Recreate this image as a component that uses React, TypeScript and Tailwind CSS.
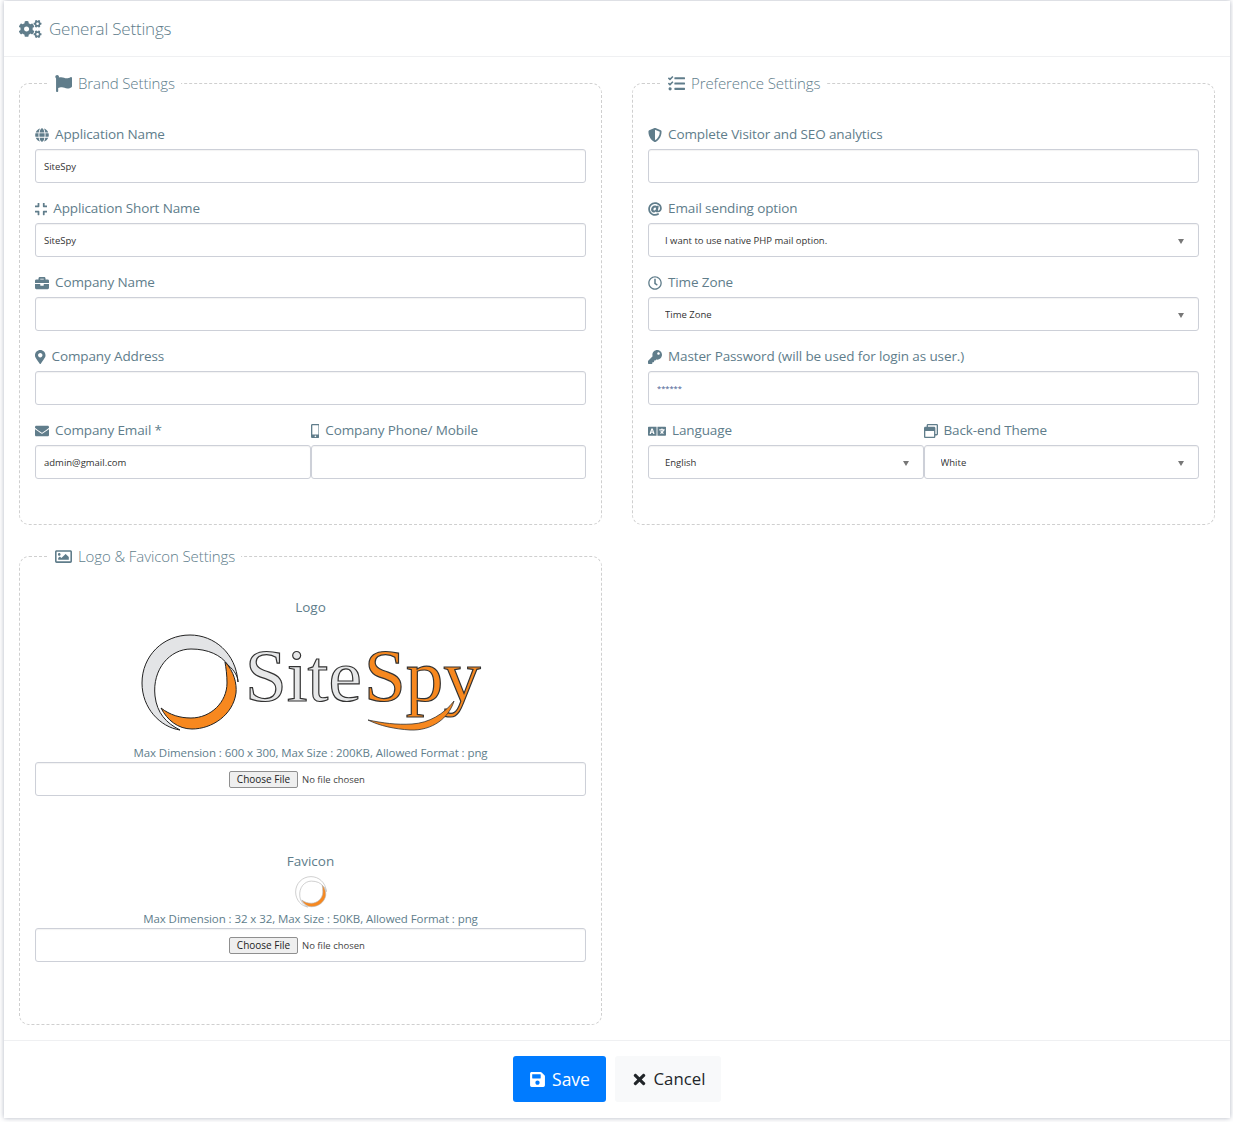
import React from "react";
import type { IconType } from "react-icons";
import {
  FaAt,
  FaBriefcase,
  FaCogs,
  FaCompress,
  FaFlag,
  FaGlobe,
  FaKey,
  FaLanguage,
  FaMapMarkerAlt,
  FaMobileAlt,
  FaRegClock,
  FaRegImage,
  FaRegWindowRestore,
  FaSave,
  FaShieldAlt,
  FaTasks,
  FaTimes,
  FaEnvelope,
} from "react-icons/fa";

const inputBox =
  "block h-[34px] w-full rounded-[3px] border border-[#cdd0d8] bg-white shadow-[inset_0_1px_1px_rgba(0,0,0,.05)] outline-none";

type FieldProps = { icon: IconType; iconClass?: string; label: string };

function Label({ icon: Icon, iconClass = "h-[14px] w-[14px]", children }: { icon: IconType; iconClass?: string; children: React.ReactNode }) {
  return (
    <div className="flex h-[27px] items-center gap-[6px] pb-[1px] text-[13.5px] leading-none tracking-[-0.12px] text-[#607d8b]">
      <Icon className={`shrink-0 ${iconClass}`} />
      <span>{children}</span>
    </div>
  );
}

function TextField({ icon, iconClass, label, value, inputClass = "text-[9.5px] text-[#333]" }: FieldProps & { value?: string; inputClass?: string }) {
  return (
    <div className="h-[74px] pt-[2px]">
      <Label icon={icon} iconClass={iconClass}>{label}</Label>
      <input className={`${inputBox} px-[8px] ${inputClass}`} defaultValue={value} />
    </div>
  );
}

function SelectField({ icon, iconClass, label, value }: FieldProps & { value: string }) {
  return (
    <div className="h-[74px] pt-[2px]">
      <Label icon={icon} iconClass={iconClass}>{label}</Label>
      <div className="relative">
        <select className={`${inputBox} appearance-none pt-[2px] pl-[16px] text-[9.5px] text-[#333]`} defaultValue={value}>
          <option>{value}</option>
        </select>
        <span className="absolute top-[16px] right-[15px] h-0 w-0 border-x-[3px] border-t-[5px] border-x-transparent border-t-[#777]" />
      </div>
    </div>
  );
}

function Panel({ icon: Icon, title, className, children }: { icon: IconType; title: string; className: string; children: React.ReactNode }) {
  return (
    <fieldset className={`rounded-[10px] border border-dashed border-[#cfcfcf] px-[15px] ${className}`}>
      <legend className="ml-[14px] flex items-center gap-[6px] px-[6px] text-[15px] leading-[22px] font-light tracking-[-0.1px] text-[#607d8b]">
        <Icon className="h-[17px] w-[17px]" />
        <span>{title}</span>
      </legend>
      {children}
    </fieldset>
  );
}

function Ring({ line, width, grey }: { line: string; width: number; grey: string }) {
  return (
    <>
      <path
        d="M238 681C236 652 214 634 190 634C163 634 142 655 142 682C142 707 160 726 180 729C166 722 157 712 155 695C152 668 170 648 191 648C208 648 221 654 228 664C235 670 238 676 238 681Z"
        fill={grey}
        stroke={line}
        strokeWidth={width}
      />
      <path
        d="M225 661C234 670 237 683 236 692C233 714 212 728 192 728C178 728 167 719 161 707C170 714 180 717 191 717C211 717 227 701 227 682C227 674 226 667 225 661Z"
        fill="#f7881f"
        stroke={line}
        strokeWidth={width}
      />
    </>
  );
}

function SiteSpyLogo() {
  return (
    <svg viewBox="140 630 345 104" width="345" height="104" className="ml-[105px] block">
      <Ring line="#222" width={1} grey="#e3e4e6" />
      <g fontFamily="'Liberation Serif', serif" fontSize="75" stroke="#333" strokeWidth="1.2">
        <text x="245" y="700" fill="#e6e7e8">Site</text>
        <text x="364" y="700" fill="#f7881f">Spy</text>
      </g>
      <path
        d="M368 719C383 722 396 724 412 723C429 722 444 713 454 700C449 717 432 730 410 729C395 728 380 725 368 719Z"
        fill="#f7881f"
        stroke="#333"
        strokeWidth="0.8"
      />
    </svg>
  );
}

function FaviconRing() {
  return (
    <svg viewBox="140 632 100 100" width="32" height="32" className="mx-auto block">
      <Ring line="#b5b5b5" width={2} grey="#fff" />
    </svg>
  );
}

function UploadBlock({ hint }: { hint: string }) {
  return (
    <>
      <div className="h-[18px] text-center text-[11.5px] leading-[18px] tracking-[-0.08px] text-[#607d8b]">{hint}</div>
      <div className={`${inputBox} flex items-center pl-[193px]`}>
        <input
          type="file"
          className="w-[170px] text-[9.5px] text-[#444] file:mr-[4px] file:h-[17px] file:w-[69px] file:rounded-[2px] file:border file:border-[#8f8f8f] file:bg-[#efefef] file:text-[10px] file:text-[#222]"
        />
      </div>
    </>
  );
}

export default function App() {
  return (
    <div
      className="h-[1122px] bg-white pt-px pr-[3px] pb-[4px] pl-[4px]"
      style={{ fontFamily: "'Open Sans', sans-serif" }}
    >
      <div className="flex h-full flex-col bg-white shadow-[0_0_5px_rgba(60,70,100,.4)]">
        <header className="flex h-[56px] shrink-0 items-center gap-[7.5px] border-b border-[#eff0f2] px-[15px] text-[17px] font-light tracking-[-0.2px] text-[#607d8b]">
          <FaCogs className="h-[18px] w-[22.5px]" />
          <span>General Settings</span>
        </header>

        <div className="grid flex-1 grid-cols-2 content-start gap-x-[30px] px-[15px] pt-[15px]">
          <Panel icon={FaFlag} title="Brand Settings" className="h-[453px]">
            <div className="pt-[26px]">
              <TextField icon={FaGlobe} label="Application Name" value="SiteSpy" />
              <TextField icon={FaCompress} iconClass="h-[14px] w-[12.25px]" label="Application Short Name" value="SiteSpy" />
              <TextField icon={FaBriefcase} label="Company Name" />
              <TextField icon={FaMapMarkerAlt} iconClass="h-[14px] w-[10.5px]" label="Company Address" />
              <div className="grid grid-cols-2">
                <TextField icon={FaEnvelope} label="Company Email *" value="admin@gmail.com" />
                <TextField icon={FaMobileAlt} iconClass="h-[14px] w-[8.75px]" label="Company Phone/ Mobile" />
              </div>
            </div>
          </Panel>

          <Panel icon={FaTasks} title="Preference Settings" className="h-[453px]">
            <div className="pt-[26px]">
              <TextField icon={FaShieldAlt} label="Complete Visitor and SEO analytics" />
              <SelectField icon={FaAt} label="Email sending option" value="I want to use native PHP mail option." />
              <SelectField icon={FaRegClock} label="Time Zone" value="Time Zone" />
              <TextField
                icon={FaKey}
                label="Master Password (will be used for login as user.)"
                value="******"
                inputClass="text-[7.5px] text-[#3f5a90]"
              />
              <div className="grid grid-cols-2">
                <SelectField icon={FaLanguage} iconClass="h-[14.4px] w-[18px]" label="Language" value="English" />
                <SelectField icon={FaRegWindowRestore} label="Back-end Theme" value="White" />
              </div>
            </div>
          </Panel>

          <Panel icon={FaRegImage} title="Logo & Favicon Settings" className="mt-[20px] h-[480px]">
            <div className="pt-[28px]">
              <div className="h-[24px] text-center text-[13.5px] leading-[24px] text-[#607d8b]">Logo</div>
              <div className="h-[125px] pt-[12px]"><SiteSpyLogo /></div>
              <UploadBlock hint="Max Dimension : 600 x 300, Max Size : 200KB, Allowed Format : png" />
              <div className="mt-[53px] h-[24px] text-center text-[13.5px] leading-[24px] text-[#607d8b]">Favicon</div>
              <div className="h-[37px] pt-[3px]"><FaviconRing /></div>
              <UploadBlock hint="Max Dimension : 32 x 32, Max Size : 50KB, Allowed Format : png" />
            </div>
          </Panel>
        </div>

        <footer className="flex h-[78px] shrink-0 items-start justify-center gap-[9px] border-t border-[#eff0f2] pt-[15px]">
          <button className="flex h-[46px] w-[93px] items-center justify-center gap-[6px] rounded-[3px] bg-[#007bff] text-[17.5px] text-white">
            <FaSave className="text-[17px]" /> Save
          </button>
          <button className="flex h-[46px] w-[106px] items-center justify-center gap-[6px] rounded-[3px] bg-[#f8f9fa] text-[16.8px] text-[#212529]">
            <FaTimes className="text-[17px]" /> Cancel
          </button>
        </footer>
      </div>
    </div>
  );
}
